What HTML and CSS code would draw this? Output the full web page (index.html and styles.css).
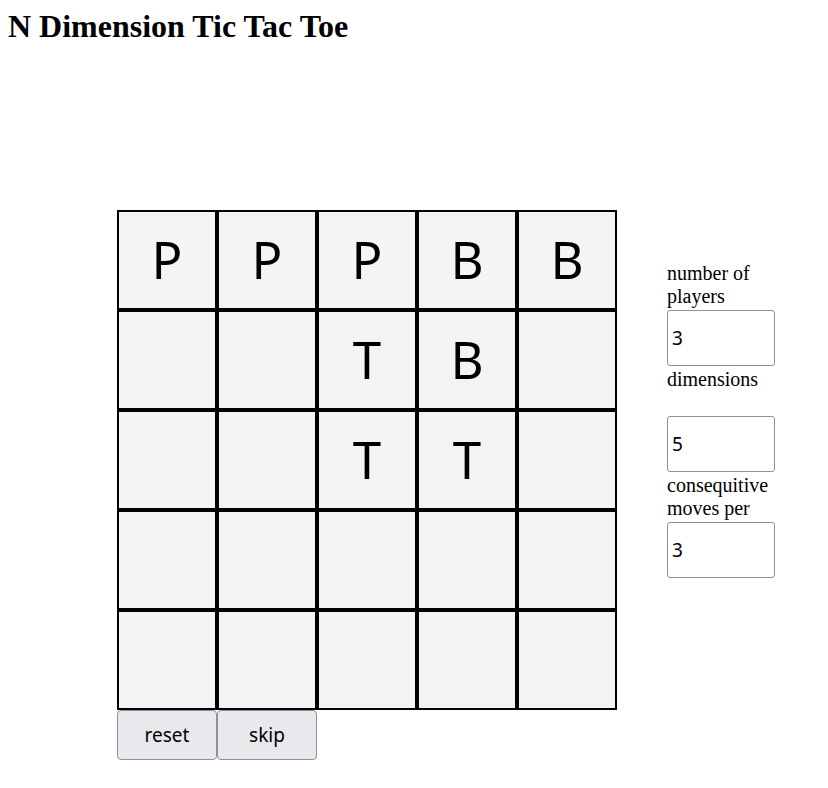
FILE: index.html
```html
<!DOCTYPE html>
<html>
<head>
<meta charset="utf-8">
<title>N Dimension Tic Tac Toe</title>
<link rel="stylesheet" href="styles.css">
</head>
<body>
<h1 class="title">N Dimension Tic Tac Toe</h1>
<div class="game">
  <div class="board-col">
    <div class="board">
      <div class="cell">P</div><div class="cell">P</div><div class="cell">P</div><div class="cell">B</div><div class="cell">B</div>
      <div class="cell"></div><div class="cell"></div><div class="cell">T</div><div class="cell">B</div><div class="cell"></div>
      <div class="cell"></div><div class="cell"></div><div class="cell">T</div><div class="cell">T</div><div class="cell"></div>
      <div class="cell"></div><div class="cell"></div><div class="cell"></div><div class="cell"></div><div class="cell"></div>
      <div class="cell"></div><div class="cell"></div><div class="cell"></div><div class="cell"></div><div class="cell"></div>
    </div>
    <div class="controls">
      <button class="btn">reset</button><button class="btn">skip</button>
    </div>
  </div>
  <div class="settings">
    <label class="label">number of players</label>
    <input class="field" type="text" value="3">
    <label class="label">dimensions</label>
    <input class="field" type="text" value="5">
    <label class="label">consequitive moves per</label>
    <input class="field" type="text" value="3">
  </div>
</div>
</body>
</html>
```
FILE: styles.css
```css
body {
  margin: 8px;
  font-family: "Liberation Serif", "Times New Roman", serif;
  background: #ffffff;
  color: #000000;
}
.title {
  margin: 0;
  font-size: 32px;
  font-weight: bold;
  line-height: 37px;
}
.game {
  display: flex;
  align-items: flex-start;
  margin-top: 165px;
  padding-left: 109px;
  gap: 50px;
}
.board-col {
  display: flex;
  flex-direction: column;
}
.board {
  display: grid;
  grid-template-columns: repeat(5, 100px);
  grid-template-rows: repeat(5, 100px);
}
.cell {
  box-sizing: border-box;
  border: 2px solid #000;
  background: #f4f4f4;
  display: flex;
  align-items: center;
  justify-content: center;
  font-family: "Noto Sans", "Open Sans", sans-serif;
  font-size: 51px;
  line-height: 1;
  padding-bottom: 2px;
}
.controls {
  display: flex;
}
.btn {
  box-sizing: border-box;
  width: 100px;
  height: 50px;
  margin: 0;
  background: #e9e9ed;
  border: 1px solid #8f8f9d;
  border-radius: 4px;
  font-family: "Noto Sans", "Open Sans", sans-serif;
  font-size: 19px;
  color: #000;
  padding: 0;
}
.settings {
  display: flex;
  flex-direction: column;
  width: 108px;
  margin-top: 52px;
}
.label {
  display: block;
  height: 46px;
  font-size: 20px;
  line-height: 23px;
}
.field {
  box-sizing: border-box;
  width: 108px;
  height: 56px;
  margin: 2px 0;
  padding: 1px 4px;
  border: 1px solid #8f8f9d;
  border-radius: 3px;
  font-family: "Noto Sans", "Open Sans", sans-serif;
  font-size: 19px;
  color: #000;
  background: #fff;
}
```
